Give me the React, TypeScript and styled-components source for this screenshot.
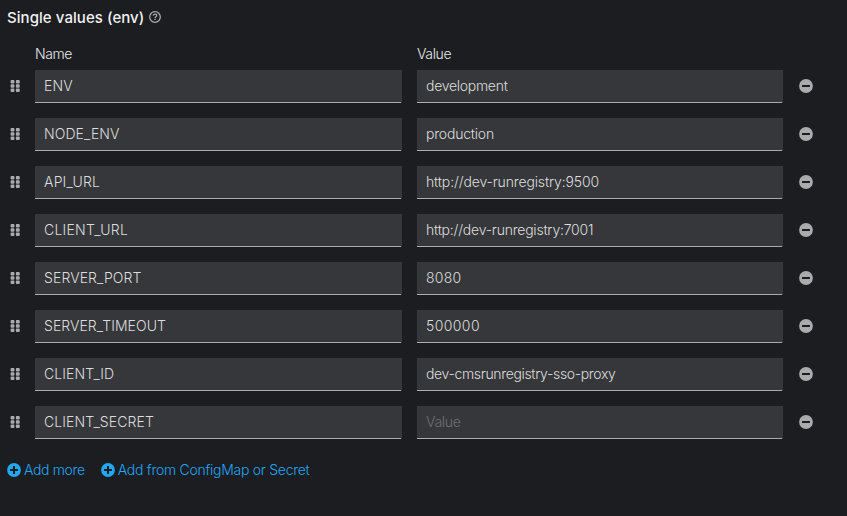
import React from 'react';
import styled, { createGlobalStyle } from 'styled-components';

const GlobalStyle = createGlobalStyle`
  * { box-sizing: border-box; }
  html, body { margin: 0; height: 100%; background: #1b1d21; }
  body { font: 300 14px/21px Inter, 'Noto Sans', sans-serif; color: #e0e0e0; }
`;

const Page = styled.main`
  min-height: 516px;
  padding: 5px 28px 0 7px;
  background: #1b1d21;
  overflow: hidden;
`;

const Text = styled.span<{ $track?: number }>`
  letter-spacing: ${p => p.$track ?? 0}px;
  white-space: nowrap;
`;

const Heading = styled.h2`
  display: flex;
  align-items: center;
  gap: 5px;
  height: 24px;
  margin: 0;
  font-size: 15px;
  font-weight: 500;
  color: #f2f2f2;
`;

const Grid = styled.div`
  display: grid;
  column-gap: 15px;
`;

const Labels = styled(Grid)`
  grid-template-columns: 13px 367px 366px;
  height: 21px;
  margin: 14px 0 6px;
  color: #e8e8e8;
`;

const ColumnLabel = styled(Text)`
  &:first-child { grid-column: 2; }
`;

const Rows = styled.div`
  display: flex;
  flex-direction: column;
  gap: 15px;
`;

const Row = styled(Grid)`
  grid-template-columns: 13px 367px 366px 16px;
  align-items: center;
  height: 33px;
`;

const Field = styled.div<{ $placeholder?: boolean }>`
  display: flex;
  align-items: center;
  height: 33px;
  padding: 0 9px 3px;
  background:
    linear-gradient(#aaabac, #aaabac) left bottom / calc(100% - 1px) 1px no-repeat,
    #36373a;
  color: ${p => (p.$placeholder ? '#6e6f72' : '#dddddd')};
`;

const IconButton = styled.button`
  display: flex;
  margin: 0 0 1px;
  padding: 0;
  border: 0;
  background: none;
  color: #aaabac;

  svg { flex: none; }
`;

const RemoveButton = styled(IconButton)`
  margin-left: 1px;
`;

const Actions = styled.div`
  display: flex;
  gap: 16px;
  margin-top: 20px;
`;

const Link = styled.button`
  display: flex;
  align-items: center;
  gap: 3px;
  height: 22px;
  padding: 0 0 2px;
  border: 0;
  background: none;
  font: inherit;
  color: #1fa7f8;

  svg { flex: none; margin-top: 1px; }
`;

const HelpIcon = () => (
  <svg width="12" height="12" viewBox="0 0 12 12" fill="none" stroke="#aaabac">
    <circle cx="6" cy="6" r="5.3" strokeWidth="1.3" />
    <path d="M4.2 4.7C4.4 3.6 5.1 3.2 6 3.2c1.1 0 1.8.6 1.8 1.4C7.8 5.7 6 5.7 6 7" strokeWidth="1.3" />
    <path d="M6 7.7v1.4" strokeWidth="1.4" />
  </svg>
);

const GripIcon = () => (
  <svg width="16" height="14" viewBox="0 0 16 14" fill="#aaabac">
    {[3.6, 8.9].map(x => [1, 5.3, 9.6].map(y => (
      <rect key={`${x}-${y}`} x={x} y={y} width="3.8" height="3.5" rx=".8" />
    )))}
  </svg>
);

const MinusIcon = () => (
  <svg width="14" height="14" viewBox="0 0 14 14">
    <circle cx="7" cy="7" r="6.9" fill="#aaabac" />
    <rect x="3" y="6" width="8" height="2" rx=".3" fill="#1b1d21" />
  </svg>
);

const PlusIcon = () => (
  <svg width="14" height="14" viewBox="0 0 14 14">
    <circle cx="7" cy="7" r="6.9" fill="#1fa7f8" />
    <path d="M3 7h8M7 3v8" stroke="#1b1d21" strokeWidth="2" />
  </svg>
);

type Cell = [string, number];
const variables: { name: Cell; value?: Cell }[] = [
  { name: ['ENV', 0.1], value: ['development', -0.28] },
  { name: ['NODE_ENV', 0.1], value: ['production', -0.2] },
  { name: ['API_URL', 0.2], value: ['http://dev-runregistry:9500', -0.14] },
  { name: ['CLIENT_URL', 0.25], value: ['http://dev-runregistry:7001', -0.22] },
  { name: ['SERVER_PORT', 0.1], value: ['8080', 0.25] },
  { name: ['SERVER_TIMEOUT', 0.05], value: ['500000', 0.4] },
  { name: ['CLIENT_ID', 0.1], value: ['dev-cmsrunregistry-sso-proxy', -0.34] },
  { name: ['CLIENT_SECRET', 0.1] },
];

export default function App() {
  return (
    <Page>
      <GlobalStyle />
      <Heading>
        <Text $track={0.06}>Single values (env)</Text>
        <HelpIcon />
      </Heading>
      <Labels>
        <ColumnLabel $track={-0.4}>Name</ColumnLabel>
        <ColumnLabel $track={-0.35}>Value</ColumnLabel>
      </Labels>
      <Rows>
        {variables.map(({ name, value }) => (
          <Row key={name[0]}>
            <IconButton aria-label="Reorder"><GripIcon /></IconButton>
            <Field><Text $track={name[1]}>{name[0]}</Text></Field>
            <Field $placeholder={!value}>
              <Text $track={value ? value[1] : -0.3}>{value ? value[0] : 'Value'}</Text>
            </Field>
            <RemoveButton aria-label="Remove"><MinusIcon /></RemoveButton>
          </Row>
        ))}
      </Rows>
      <Actions>
        <Link><PlusIcon /><Text $track={-0.35}>Add more</Text></Link>
        <Link><PlusIcon /><Text $track={-0.27}>Add from ConfigMap or Secret</Text></Link>
      </Actions>
    </Page>
  );
}
